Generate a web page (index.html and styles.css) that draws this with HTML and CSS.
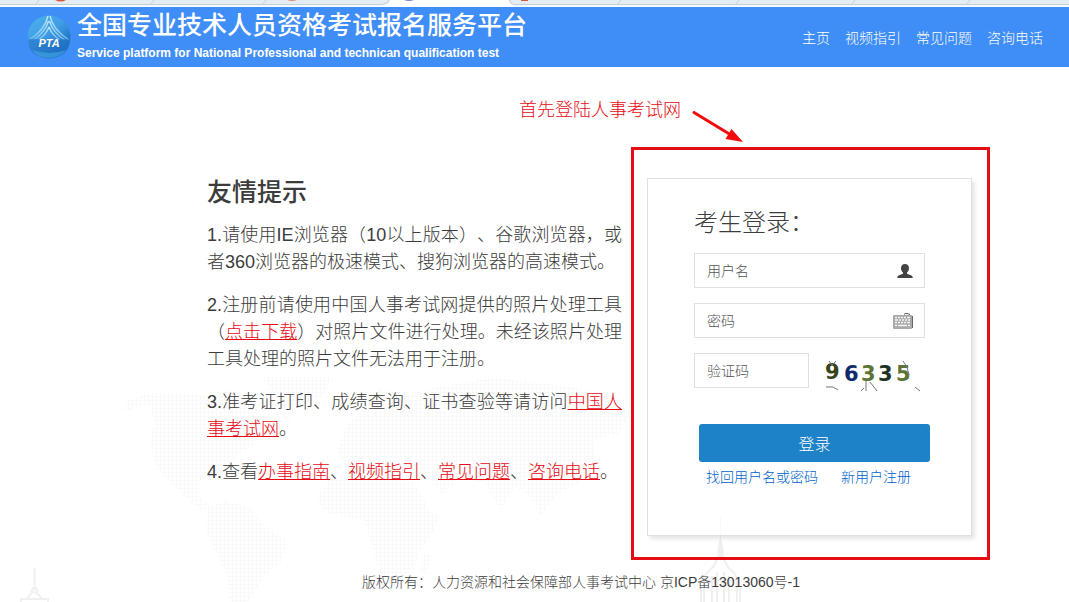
FILE: index.html
```
<!DOCTYPE html>
<html lang="zh-CN">
<head>
    <meta charset="UTF-8">
    <meta name="viewport" content="width=device-width, initial-scale=1.0">
    <title>全国专业技术人员资格考试报名服务平台</title>
    <link rel="stylesheet" href="styles.css">
</head>
<body>
    <!-- Background: dotted world map and towers -->
    <svg class="backdrop" viewBox="0 0 1069 602" preserveAspectRatio="xMidYMax slice" aria-hidden="true">
        <defs>
            <pattern id="dots" width="4" height="4" patternUnits="userSpaceOnUse">
                <path d="M0 .5h4M.5 0v4" stroke="#f9f9f9" fill="none"/>
            </pattern>
        </defs>
        <g fill="url(#dots)">
            <path d="M127 400l24-7 56 2 20-6 25 10 12 22-8 22-22 14-14 20-22 4 2 16 12 12-10 2-26-24-20-20-6-24 4-24-6-16-24 8z"/>
            <path d="M262 377h72l-12 20-22 8-14 16-10-24z"/>
            <path d="M207 508l20-8 22 8 16 18 23 16-8 22-16 12-14 22-6 14-14-6-2-28-10-22-12-24z"/>
            <path d="M317 494l14-16 24-4 44 4 18 8 12 24 10 6-6 16-14 20-6 18-22 14-14-18-6-26-8-20-36-6-8-10z"/>
            <path d="M337 450l10-26 18-14 14-22 28 6 36-8 50-8 56 6 60 10 22 20-14 20-24 6 2 22-18 22-22 12-14 20-12-20-14-10-14 24-16-26-22-8-20 18-18-18-28-18-24 4-24 10z"/>
            <path d="M424 552l8 4-6 18-6-2z"/>
        </g>
        <g fill="none" stroke="#f0f0f0">
            <path d="M34.500 568v22M31 592l2-4h3l2 4M27 599q4-7 7-7t8 7M21 602v-3h27v3" stroke-width="2"/>
            <path d="M720.500 516v24" />
            <path d="M718 549l2-9h1l2 9v9h-5z" fill="#efefef"/>
            <path d="M717 558q-2 8-7 12t-6 9v23M724 558q2 8 7 12t6 9v23M712 602v-26M717 602v-30M724 602v-30M729 602v-26M701 602v-14M740 602v-14M704 580h33" stroke-width="2"/>
        </g>
    </svg>

    <!-- Lower edge of the tab bar -->
    <div class="tabStrip">
        <svg width="1069" height="7" viewBox="0 0 1069 7" aria-hidden="true">
            <path d="M386 7l5-7h118l5 7z" fill="#fff"/>
            <path d="M0 4.500h382q4 0 7-4.500M513 4.500h556M36 4l3-4M151 4l3-4M263 4l3-4M618 4l3-4M736 4l3-4M852 4l3-4M967 4l3-4" fill="none" stroke="#c3ced6"/>
            <path d="M509.500 0q0 4 4 4.500" fill="none" stroke="#c3ced6"/>
            <path d="M55 0h11q-5 3-11 0z" fill="#d9573c"/>
            <path d="M287 0h10q-5 2-10 0z" fill="#e08a75"/>
            <path d="M404 0h10q-5 2-10 0z" fill="#7680c8"/>
            <path d="M521 0h7v1h-7z" fill="#d9573c"/>
        </svg>
    </div>

    <header class="header">
        <svg class="logo" viewBox="0 0 44 44" aria-hidden="true">
            <defs>
                <linearGradient id="ball" x1="0" y1="0" x2="0.700" y2="1">
                    <stop offset="0" stop-color="#4db4ee"/>
                    <stop offset="0.500" stop-color="#3f9ce4"/>
                    <stop offset="1" stop-color="#1260b4"/>
                </linearGradient>
                <linearGradient id="shine" x1="0" y1="0" x2="0" y2="1">
                    <stop offset="0" stop-color="#c4e8fb"/>
                    <stop offset="1" stop-color="#6fbdf0"/>
                </linearGradient>
            </defs>
            <circle cx="22" cy="22" r="21.500" fill="url(#ball)"/>
            <g fill="none" stroke="url(#shine)" stroke-width="1.400">
                <path d="M21 1Q18 15 2 25"/>
                <path d="M23 1Q26 15 42 25"/>
                <path d="M21.500 6Q18 18 6 25"/>
                <path d="M22.500 6Q26 18 38 25"/>
                <path d="M22 12Q19 20 11 25"/>
                <path d="M22 12Q25 20 33 25"/>
            </g>
            <path d="M1 24h42q0 19-21 19T1 24z" fill="#2374c6" opacity=".6"/>
            <path d="M5 35q17 6 34 0-6 8-17 8T5 35z" fill="#49b4ea" opacity=".5"/>
            <text x="22" y="32" class="logoText">PTA</text>
        </svg>
        <div class="brand">
            <h1>全国专业技术人员资格考试报名服务平台</h1>
            <p>Service platform for National Professional and technican qualification test</p>
        </div>
        <nav class="nav">
            <a href="#">主页</a>
            <a href="#">视频指引</a>
            <a href="#">常见问题</a>
            <a href="#">咨询电话</a>
        </nav>
    </header>

    <div class="note">
        <span>首先登陆人事考试网</span>
        <svg width="56" height="50" viewBox="0 0 56 50" aria-hidden="true">
            <path d="M4 15.500L41 38" stroke="#f40a0a" stroke-width="3" stroke-linecap="round"/>
            <path d="M53 45l-17.500-3 6-10z" fill="#f40a0a"/>
        </svg>
    </div>

    <main class="content">
        <section class="tips">
            <h2>友情提示</h2>
            <p>1.请使用IE浏览器（10以上版本）、谷歌浏览器，或者360浏览器的极速模式、搜狗浏览器的高速模式。</p>
            <p>2.注册前请使用中国人事考试网提供的照片处理工具（<a href="#">点击下载</a>）对照片文件进行处理。未经该照片处理工具处理的照片文件无法用于注册。</p>
            <p>3.准考证打印、成绩查询、证书查验等请访问<a href="#">中国人事考试网</a>。</p>
            <p>4.查看<a href="#">办事指南</a>、<a href="#">视频指引</a>、<a href="#">常见问题</a>、<a href="#">咨询电话</a>。</p>
        </section>

        <div class="frame">
            <form class="card">
                <h2>考生登录：</h2>
                <div class="fields">
                    <div class="inputBox">
                        <input type="text" placeholder="用户名" aria-label="用户名">
                        <svg width="22" height="18" viewBox="0 0 22 18" aria-hidden="true">
                            <path d="M11 2c2.600 0 4 1.700 4 4 0 2-.8 3.500-2 4.500v1.200l4.500 1.800q1.300.6 1.300 2.500H3.200q0-1.900 1.300-2.500L9 11.700v-1.200C7.800 9.500 7 8 7 6c0-2.300 1.400-4 4-4z" fill="#444"/>
                        </svg>
                    </div>
                    <div class="inputBox">
                        <input type="password" placeholder="密码" aria-label="密码">
                        <svg width="24" height="18" viewBox="0 0 24 18" aria-hidden="true">
                            <path d="M12 2.500q1-1.500 3-1t3 1" fill="none" stroke="#555"/>
                            <rect x="1" y="3" width="19" height="14" rx="1" fill="#a9a9a9"/>
                            <path d="M20.500 4v12" stroke="#666"/>
                            <path d="M3 5.500h2M6 5.500h2M9 5.500h2M12 5.500h2M15 5.500h3M3 8h3M7 8h2M10 8h2M13 8h2M16 8h2M3 10.500h2M6 10.500h2M9 10.500h2M12 10.500h2M15 10.500h3M3 13.500h2M6 13.500h9M16 13.500h2" stroke="#f4f4f4" stroke-width="1.500"/>
                        </svg>
                    </div>
                    <div class="codeRow">
                        <input type="text" placeholder="验证码" aria-label="验证码">
                        <svg width="104" height="35" viewBox="0 0 104 35" role="img" aria-label="96335">
                            <g class="codeText">
                                <text x="4" y="26" fill="#35421c">9</text>
                                <text x="23" y="28" fill="#0f2a6b">6</text>
                                <text x="40" y="28" fill="#5c7438">3</text>
                                <text x="57" y="28" fill="#1c3324">3</text>
                                <text x="75" y="28" fill="#5c7438">5</text>
                            </g>
                            <path d="M8 8l3 4 4-4M82 8l4 6 2 8M5 34h7l5 3M45 28v10M49 29l7 9M40 38l3-3M94 34l5 4" fill="none" stroke="#777"/>
                        </svg>
                    </div>
                </div>
                <div class="actions">
                    <button type="submit">登录</button>
                    <div class="links">
                        <a href="#">找回用户名或密码</a>
                        <a href="#">新用户注册</a>
                    </div>
                </div>
            </form>
        </div>
    </main>

    <footer class="footer">版权所有：人力资源和社会保障部人事考试中心 京ICP备13013060号-1</footer>
</body>
</html>
```
FILE: styles.css
```
*, *:before, *:after {
    box-sizing: border-box;
}
h1, h2, p {
    margin: 0;
}
body {
    position: relative;
    margin: 0;
    min-height: 100vh;
    background-color: #fff;
    color: #3c3c3c;
    font-family: "Liberation Sans", "Noto Sans CJK SC", sans-serif;
    font-weight: 300;
    font-size: 14px;
    text-spacing-trim: space-all;
}
svg {
    display: block;
    flex: none;
}
.backdrop {
    position: absolute;
    inset: 0;
    width: 100%;
    height: 100%;
    z-index: -1;
}

/* Header */
.tabStrip {
    height: 7px;
    overflow: hidden;
    background: linear-gradient(#e4edf4 4px, #f4fbfd 4px);
}
.header {
    display: flex;
    align-items: center;
    min-height: 60px;
    padding: 0 26px 0 27px;
    background-color: #3f8ef7;
    color: #fff;
}
.logo {
    width: 44px;
    height: 44px;
}
.logoText {
    fill: #fff;
    font-size: 11px;
    font-style: italic;
    font-weight: bold;
    text-anchor: middle;
}
.brand {
    margin-left: 6px;
    padding-bottom: 4px;
}
.brand h1 {
    font-size: 25px;
    font-weight: 500;
    line-height: 36px;
}
.brand p {
    font-size: 12px;
    font-weight: bold;
    line-height: 20px;
}
.nav {
    display: flex;
    gap: 15px;
    margin-left: auto;
}
.nav a {
    color: #fff;
    text-decoration: none;
}

/* Red note with arrow */
.note {
    display: flex;
    justify-content: flex-end;
    gap: 9px;
    height: 80px;
    padding: 30px 323px 0 0;
    color: #e60c14;
    font-size: 18px;
    line-height: 27px;
}

/* Tips */
.content {
    display: flex;
    align-items: flex-start;
    gap: 9px;
    padding: 0 79px 0 207px;
}
.tips {
    flex: 1;
    padding-top: 27px;
    font-size: 18px;
    line-height: 27px;
    text-align: justify;
}
.tips h2 {
    margin-bottom: 12px;
    font-size: 25px;
    font-weight: 500;
    line-height: 36px;
}
.tips p {
    margin-bottom: 16px;
}
.tips p:last-child {
    margin-bottom: 0;
}
.tips a {
    color: #e60c14;
}

/* Login form */
.frame {
    flex: none;
    width: 359px;
    padding: 28px 15px 21px 13px;
    border: 3px solid #e60c14;
}
.card {
    padding: 29px 41px 48px 46px;
    border: 1px solid #e0e0e0;
    background-color: rgba(255, 255, 255, 0.6);
    box-shadow: 3px 3px 4px rgba(0, 0, 0, 0.1);
}
.card h2 {
    margin-bottom: 15px;
    font-size: 24px;
    font-weight: 300;
    line-height: 30px;
}
.fields {
    display: flex;
    flex-direction: column;
    gap: 15px;
    padding-right: 5px;
}
.inputBox,
.codeRow input {
    height: 35px;
    border: 1px solid #e0e0e0;
    background-color: #fff;
}
.inputBox {
    display: flex;
    align-items: center;
    padding-right: 8px;
}
input {
    flex: 1;
    min-width: 0;
    height: 100%;
    padding: 0 12px;
    border: none;
    background: none;
    font: inherit;
}
input::placeholder {
    color: #555;
}
.codeRow {
    display: flex;
    gap: 12px;
}
.codeRow svg {
    overflow: visible;
}
.codeText {
    font-family: "DejaVu Sans", sans-serif;
    font-size: 21px;
    font-weight: bold;
}
.actions {
    padding: 36px 0 0 5px;
}
button {
    width: 100%;
    height: 38px;
    border: none;
    border-radius: 3px;
    background-color: #1d82c7;
    color: #fff;
    font: inherit;
    font-size: 16px;
    cursor: pointer;
}
.links {
    display: flex;
    gap: 23px;
    padding: 5px 0 0 7px;
    line-height: 20px;
}
.links a {
    color: #0062cc;
    text-decoration: none;
}

.footer {
    padding: 12px 0 0 93px;
    line-height: 20px;
    text-align: center;
}
```
